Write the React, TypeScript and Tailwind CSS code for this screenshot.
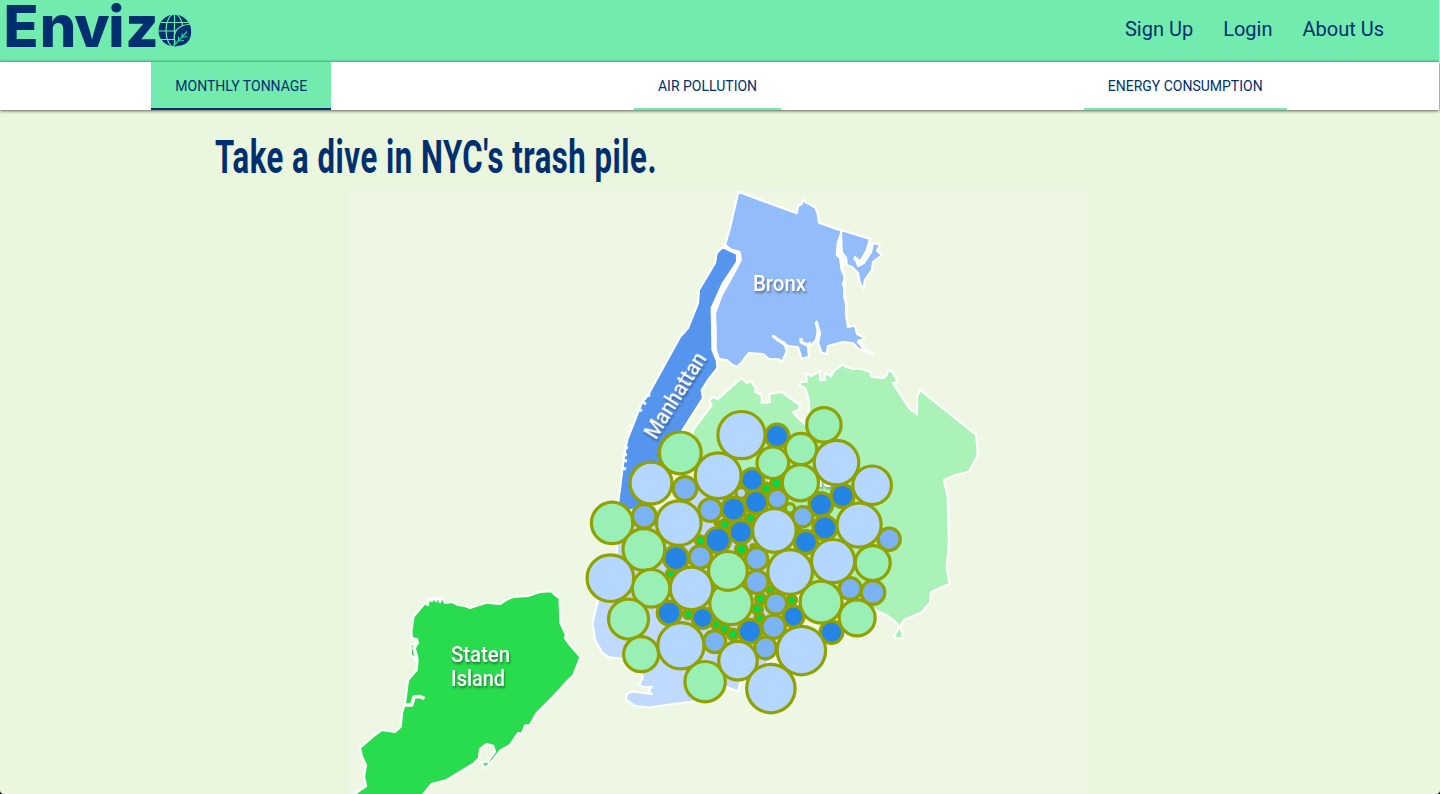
import React from "react";

type Bubble = [number, number, number, string];

const LIGHT = "#b3d7ff";
const GREEN = "#9aefb4";
const MID = "#7bb3f2";
const DEEP = "#2585e4";
const VIVID = "#00d84c";

const bubbles: Bubble[] = [
  [731, 603.3, 21.3, GREEN],
  [717, 522.7, 2, MID],
  [799, 528.7, 2, DEEP],
  [753, 546.7, 2, VIVID],
  [741.3, 493, 5.3, LIGHT],
  [790, 508.3, 4.7, GREEN],
  [700.3, 540.7, 4.8, VIVID],
  [725, 524.3, 5, VIVID],
  [741.3, 549.3, 5.8, VIVID],
  [766.3, 488.3, 5.2, VIVID],
  [776.3, 483.3, 5.6, VIVID],
  [750.3, 518.3, 4.7, VIVID],
  [688.3, 614, 4.8, VIVID],
  [670.7, 573.7, 4.4, VIVID],
  [716, 624.3, 4.5, VIVID],
  [724.3, 629, 4.8, VIVID],
  [733, 634.3, 5.3, VIVID],
  [770.3, 590, 3.8, VIVID],
  [760.7, 599, 5.2, VIVID],
  [757.3, 609, 5.2, VIVID],
  [759.7, 618, 4.6, VIVID],
  [791.7, 600, 4.8, VIVID],
  [685, 488.6, 11.9, MID],
  [644.3, 516.3, 11.9, MID],
  [710.3, 510, 11.5, MID],
  [700.3, 557, 11.3, MID],
  [777.3, 499, 9.9, MID],
  [802.7, 516.7, 10.2, MID],
  [889.2, 539.3, 11.1, MID],
  [756.7, 559, 11.3, MID],
  [714.7, 641.7, 11, MID],
  [756.7, 582, 11.5, MID],
  [776, 603.5, 10.7, MID],
  [773.7, 626.7, 11.7, MID],
  [765.5, 647.9, 10.9, MID],
  [850.3, 588.7, 11, MID],
  [873, 592.5, 11.8, MID],
  [733.5, 509.2, 12, DEEP],
  [717.8, 540.2, 12.7, DEEP],
  [676, 558.2, 12.4, DEEP],
  [740.8, 531.9, 11.6, DEEP],
  [777, 435.9, 11.8, DEEP],
  [752.2, 479.9, 11.4, DEEP],
  [756.2, 502.1, 11.6, DEEP],
  [820.9, 504.5, 11.8, DEEP],
  [842.5, 495.9, 11.6, DEEP],
  [824.9, 527.9, 12, DEEP],
  [805.9, 541.9, 11.6, DEEP],
  [669.2, 612.9, 11.9, DEEP],
  [702.6, 618, 10.5, DEEP],
  [749.9, 631.2, 11.8, DEEP],
  [793.5, 616.4, 10.5, DEEP],
  [831.5, 632.2, 11.3, DEEP],
  [680.3, 452.9, 20.9, GREEN],
  [612.1, 522.9, 20.7, GREEN],
  [643.9, 549.5, 20.9, GREEN],
  [823.9, 424.9, 17.2, GREEN],
  [801, 449.1, 15.7, GREEN],
  [772.8, 462.8, 15.8, GREEN],
  [800.4, 482.7, 18.1, GREEN],
  [872.7, 563.1, 17.5, GREEN],
  [651.1, 588.3, 18.8, GREEN],
  [628.5, 619.1, 20, GREEN],
  [641.1, 654.2, 17.5, GREEN],
  [727.9, 570.9, 19.4, GREEN],
  [705.1, 681.7, 20.2, GREEN],
  [821.1, 602.1, 21, GREEN],
  [857.1, 617.9, 18, GREEN],
  [651, 483.1, 21, LIGHT],
  [718.2, 475.7, 22.9, LIGHT],
  [678.8, 523.1, 22.3, LIGHT],
  [741.5, 435.1, 23.6, LIGHT],
  [836.5, 462.6, 22.3, LIGHT],
  [872.1, 485.3, 19.3, LIGHT],
  [774.4, 530.5, 21.8, LIGHT],
  [859.1, 525.1, 22.1, LIGHT],
  [833.1, 561.1, 21.6, LIGHT],
  [790.1, 572, 22.3, LIGHT],
  [610.4, 578.2, 23.3, LIGHT],
  [691.4, 588.4, 21.2, LIGHT],
  [680.9, 645.8, 23.1, LIGHT],
  [738, 660.7, 19.3, LIGHT],
  [801.4, 650.6, 24.2, LIGHT],
  [770.9, 688.6, 24.2, LIGHT],
];

const QUEENS =
  "M693 430L708 410L711.7 405L709 400.7L713 397L718 399L730 388L741.7 378L746.7 383L751.7 381L753 385L756 386.7L755 391.7L761.7 395V403L770 402L769 394L781.7 392L800 405L799 410L793 412L798 418L805 424L809 422V400L805 388L799 385L801 382L806.7 381.7L806 373L811 376L820 371V380H825V372.7L831 376L834 371L843 364L846 367L853 369L861 369L870 371.7L871.7 377L883 378L886 376L888 370.7H891.7L898 381.7L893 383L901.7 396.7L910 409L917 414.5V396.7L920 390L976.3 435L977.8 455L969 471.7L956 475L944 480L947.7 496.7L949 543L946.7 568L949.5 584L931 592L930 603L926 607L922.7 611.7L904 620L900 627L902.5 633V638L898 638.5L893.5 637L898 630V624L888 616L876.7 610.7L840 590L805 585L770 560L740 500L690 470Z";
const BROOKLYN =
  "M598 600L592.5 623L595 640L602 652.5L608 657L623 659L640 673L643 676.7L641 681L639 685L643 687H651.7L649 690L651.7 694L640 692.5L632 691.5L626.7 694L625.7 700L635 706L650 707.5L673 704L693 701.7L726.7 686.7L738 691.7L740 683L750 680L770 660L775 620L770 560L745 480L700 480L680 500L640 507L617 540V552L612 575Z";
const BRONX =
  "M738.3 191.7L796.7 213.3L798 206L801.7 204L803 199.5L806 202.5L811 205L815 207.5L817.7 213L819 222.7L836.7 229L870 238.5L860 250L841 235L837.7 243L836.7 255L840 258L841.7 270L845 277L843 284L845 290L844 297L846 303V313L848 327L855 325.7L857 334L865 338L858 342L863 348L873 355L858 348.5L853 343L843 342L828 346L826.7 354L821.7 352.7L818 343L820 333L816.5 321.7L817.7 331.7L816 340L811.7 345L808 347L809 356.7L801.7 359L798 347L788 346L773 336L785 345L786.7 351.7L781.7 361.7L778 359L769 359L763 354L749 353L745 358L741.7 362.7L736.7 367L732 364.5L726.7 360L719 359L715.7 350L715.7 333L715 313L721.7 295L733 275L740.7 260L740 254L731.7 250L725 245L730 228Z";
const CITY_ISLAND =
  "M841 230L870 239L867 250L860.7 262L855 257L858 266L864 263L871 252L873 243L880 245L877 250.7L882 255L873 262L872 270L865 280L863.5 289L859.5 282L858 273L851.7 266.7L846.7 265L846 258L841.7 252Z";
const MANHATTAN =
  "M725 248L737 254V262L723 283L711.7 308L712.5 350L716.7 360L717.5 368L708 380L701.7 390L703 398L681.7 431.7L644 509L618 511L618.5 500L621.7 475L624 457L627 440L635 420L641.7 403L648 395L680 337L688 328L698 303L699 290L715 263L716.7 253L721.7 248Z";
const STATEN =
  "M425 603L428 605L429 598L432 601L433 597L436 601L437 597L440 602L442 597L445 603L452 602L458 605L465 606L470 608L479 605L486.7 602.7L500 604L506 600L513 597L528 596L540 592L551.7 591.2L554 594L559.5 598L560.5 623L566 635L565 638L570 645L580.5 657L573.5 675L566.7 681.7L553 696.7L536.7 713L530 725L525 725.7L521.7 734L518 733L510 745L500 750.7L493 760L484.5 768L481.7 762.7L488 761.7L495 751.7L493 745.7L486.7 744L480 749L479 758L473 764L446.7 780L431.7 784L421.7 796H352L366 786L364 776.7L366 765L362 756.7L360 747.7L373 736.7L381.7 730L395 732L400.7 726.7L402 713L405 703L408 680L416.7 670L417.5 660L410.7 655V645L418 643L417 639L411.7 638L411.5 630L413.5 616.7Z";

function Logo() {
  return (
    <svg
      className="block h-[62px] w-[200px] overflow-visible"
      viewBox="0 0 200 62"
    >
      <text
        x="3.6 39.7 74.3 108.2 125.2"
        y="47"
        fill="#002f70"
        fontFamily="Inter, sans-serif"
        fontWeight="800"
        fontSize="57.5"
      >
        Enviz
      </text>
      <circle cx="174.5" cy="30.5" r="16" fill="#002f70" />
      <g fill="none" stroke="#72ebae" strokeWidth="1.2">
        <ellipse cx="174.5" cy="30.5" rx="8.5" ry="16.5" />
        <path d="M174.5 14V47M158 31H191M161 22.5H188M161 39.5H188" />
      </g>
      <path
        d="M190.5 24C178 25 172 32 175 42L173.5 47.5L178 46.5C190 46 194 36 190.5 24Z"
        fill="#002f70"
        stroke="#72ebae"
        strokeWidth="1.2"
      />
      <path
        d="M174.5 45L187 31.5M178.5 40.5V36.5M178.5 41L184 40.5M182 37V33.5M182 37.5L187 36.5"
        fill="none"
        stroke="#1fd597"
        strokeWidth="1.2"
      />
    </svg>
  );
}

function BoroughMap() {
  return (
    <svg
      className="block h-[604px] w-[738px] bg-[#eef7e3]"
      viewBox="350 190 738 604"
    >
      <g stroke="#ffffff" strokeWidth="2.2" strokeLinejoin="round">
        <path d={QUEENS} fill="#abf2b9" />
        <path d={BROOKLYN} fill="#c0daff" />
        <path d={BRONX} fill="#92bcfa" />
        <path d={CITY_ISLAND} fill="#92bcfa" />
        <path d={MANHATTAN} fill="#5595ee" />
        <path d={STATEN} fill="#28dc4d" />
      </g>
      <path d="M895.5 636L899.5 629L901 636Z" fill="#abf2b9" />
      <path d="M639 508L654 504L672 492L676 496L655 512Z" fill="#eef7e3" />
      <g fill="none" stroke="#ffffff" strokeLinejoin="round">
        <path
          d="M724 246.5L730 250L739 252.5L739.5 260L726 281L713.5 309L714 350L718 359"
          strokeWidth="3.4"
        />
        <path
          d="M841 234L838.5 243L839 254L842.5 260L843 269L845 278L844.5 290L846 300L847 320"
          strokeWidth="2.6"
        />
        <path
          d="M843 262L847 260M854 258L860 263L868 249L870 241M773 336L778 340L785 344M801 338V342L807 345L811 343M816 322L819 333L818 341M858 340L864 347"
          strokeWidth="3.2"
        />
        <path
          d="M647 394L650 396M642 402L646 404M638 409L642 411M634 417L636 419M629 425L633 427M627 432L630 433M625 441L628 442M624 447L628 448M623 454L627 455M622 460L627 461M622 468L626 469"
          strokeWidth="3"
        />
        <path
          d="M405 705H411.7L414 697L420 696.5L424.5 698.7M417.5 642L414 648L416.5 657L416.5 662"
          strokeWidth="3.6"
        />
      </g>
      <g
        fill="#ffffff"
        fontFamily="Roboto, sans-serif"
        fontSize="21.5"
        fontWeight="500"
        className="[filter:drop-shadow(1.5px_2px_1px_rgba(0,0,0,0.4))]"
      >
        <text x="753" y="290.5" textLength="53" lengthAdjust="spacingAndGlyphs">
          Bronx
        </text>
        <text
          transform="translate(656 440.5) rotate(-58)"
          textLength="97"
          lengthAdjust="spacingAndGlyphs"
        >
          Manhattan
        </text>
        <text x="451" y="662" textLength="59" lengthAdjust="spacingAndGlyphs">
          Staten
        </text>
        <text x="451" y="686" textLength="54" lengthAdjust="spacingAndGlyphs">
          Island
        </text>
        <text x="767" y="486.5" textLength="66" lengthAdjust="spacingAndGlyphs">
          Queens
        </text>
      </g>
      <g stroke="#91a100" strokeWidth="3.2">
        {bubbles.map(([cx, cy, r, fill]) => (
          <circle key={`${cx}-${cy}`} cx={cx} cy={cy} r={r} fill={fill} />
        ))}
      </g>
    </svg>
  );
}

export default function App() {
  return (
    <div className="bg-black">
      <div className="h-[794px] overflow-hidden rounded-b-[4px] bg-[#eaf6de] font-[Roboto,sans-serif] text-[#002f70]">
        <header className="flex h-[62px] w-[1439px] justify-between bg-[#72ebae] pr-10">
          <Logo />
          <nav className="flex h-[58px] items-center text-xl">
            <a className="px-[15px]">Sign Up</a>
            <a className="px-[15px]">Login</a>
            <a className="px-[15px]">About Us</a>
          </nav>
        </header>
        <div className="flex h-12 w-[1439px] justify-around bg-white pr-px text-sm leading-[48px] shadow-[0_1px_3px_rgba(0,0,0,0.6),0_-1px_2px_rgba(0,0,0,0.2)]">
          <a className="border-b-2 border-[#002f70] bg-[#72ebae] px-6">
            MONTHLY TONNAGE
          </a>
          <a className="border-b-2 border-[#72ebae] px-6">AIR POLLUTION</a>
          <a className="border-b-2 border-[#72ebae] px-6">ENERGY CONSUMPTION</a>
        </div>
        <main>
          <h1 className="flex h-[80px] items-center pt-[14px] pl-[215px]">
            <svg
              className="block h-[64px] w-[450px] overflow-visible"
              viewBox="0 0 450 64"
            >
              <text
                x="0"
                y="47.5"
                fill="#002f70"
                fontFamily="Roboto, sans-serif"
                fontSize="46"
                fontWeight="700"
                letterSpacing="0.8"
                textLength="442"
                lengthAdjust="spacingAndGlyphs"
              >
                Take a dive in NYC's trash pile.
              </text>
            </svg>
          </h1>
          <div className="pl-[350px]">
            <BoroughMap />
          </div>
        </main>
      </div>
    </div>
  );
}
